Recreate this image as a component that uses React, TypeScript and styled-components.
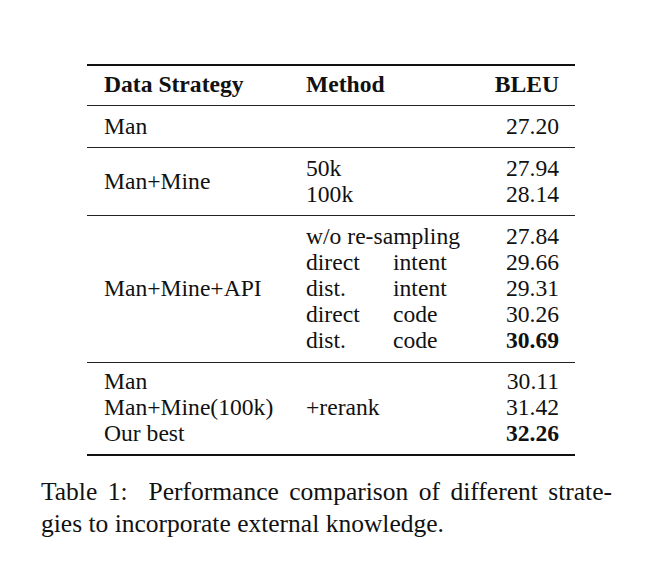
import React from "react";
import styled, { createGlobalStyle } from "styled-components";

const Global = createGlobalStyle`
  html, body { margin: 0; padding: 0; background: #ffffff; }
`;

const Page = styled.div`
  width: 648px;
  height: 562px;
  padding-top: 64px;
  box-sizing: border-box;
  display: flex;
  flex-direction: column;
  align-items: flex-start;
  font-family: "Liberation Serif", "DejaVu Serif", serif;
  color: #111;
`;

const Table = styled.div`
  margin-left: 87px;
  width: 488px;
  border-top: 2px solid #111;
  border-bottom: 2px solid #111;
  font-size: 23.6px;
  line-height: 26px;
`;

const Section = styled.div<{ $pt: number; $pb: number; $head?: boolean }>`
  display: grid;
  grid-template-columns: 202px 87px 1fr auto;
  grid-auto-rows: 26px;
  padding: ${(p) => p.$pt}px 16px ${(p) => p.$pb}px 17px;
  font-weight: ${(p) => (p.$head ? 700 : 400)};
  & + & { border-top: 1px solid #222; }
`;

const Strategy = styled.div<{ $span: number }>`
  grid-column: 1;
  grid-row: 1 / span ${(p) => p.$span};
  align-self: center;
  white-space: nowrap;
`;

const Method = styled.div<{ $wide?: boolean }>`
  grid-column: ${(p) => (p.$wide ? "2 / span 2" : "2")};
  white-space: nowrap;
`;

const Target = styled.div`
  grid-column: 3;
  white-space: nowrap;
`;

const Score = styled.div<{ $best?: boolean }>`
  grid-column: 4;
  text-align: right;
  font-weight: ${(p) => (p.$best ? 700 : "inherit")};
`;

const Caption = styled.div`
  margin: 20px 0 0 41px;
  width: 571px;
  font-size: 25.5px;
  line-height: 32px;
`;

const CaptionLine = styled.div<{ $fill?: boolean }>`
  text-align: ${(p) => (p.$fill ? "justify" : "left")};
  text-align-last: ${(p) => (p.$fill ? "justify" : "auto")};
  white-space: nowrap;
`;

type Row = { m?: string; t?: string; s: string; best?: boolean };

const apiRows: Row[] = [
  { m: "w/o re-sampling", s: "27.84" },
  { m: "direct", t: "intent", s: "29.66" },
  { m: "dist.", t: "intent", s: "29.31" },
  { m: "direct", t: "code", s: "30.26" },
  { m: "dist.", t: "code", s: "30.69", best: true },
];

const MethodCells: React.FC<{ rows: Row[] }> = ({ rows }) => (
  <>
    {rows.map((r, i) => (
      <React.Fragment key={i}>
        {r.t ? (
          <>
            <Method style={{ gridRow: i + 1 }}>{r.m}</Method>
            <Target style={{ gridRow: i + 1 }}>{r.t}</Target>
          </>
        ) : (
          <Method $wide style={{ gridRow: i + 1 }}>{r.m ?? ""}</Method>
        )}
        <Score $best={r.best} style={{ gridRow: i + 1 }}>{r.s}</Score>
      </React.Fragment>
    ))}
  </>
);

export default function App() {
  return (
    <>
      <Global />
      <Page>
        <Table>
          <Section $pt={5} $pb={8} $head>
            <Strategy $span={1}>Data Strategy</Strategy>
            <Method>Method</Method>
            <Score>BLEU</Score>
          </Section>
          <Section $pt={7} $pb={8}>
            <Strategy $span={1}>Man</Strategy>
            <MethodCells rows={[{ s: "27.20" }]} />
          </Section>
          <Section $pt={7} $pb={8}>
            <Strategy $span={2}>Man+Mine</Strategy>
            <MethodCells rows={[{ m: "50k", s: "27.94" }, { m: "100k", s: "28.14" }]} />
          </Section>
          <Section $pt={7} $pb={9}>
            <Strategy $span={5}>Man+Mine+API</Strategy>
            <MethodCells rows={apiRows} />
          </Section>
          <Section $pt={5} $pb={8}>
            <Strategy $span={1} style={{ gridRow: 1 }}>Man</Strategy>
            <Strategy $span={1} style={{ gridRow: 2 }}>Man+Mine(100k)</Strategy>
            <Strategy $span={1} style={{ gridRow: 3 }}>Our best</Strategy>
            <MethodCells
              rows={[
                { s: "30.11" },
                { m: "+rerank", s: "31.42" },
                { s: "32.26", best: true },
              ]}
            />
          </Section>
        </Table>
        <Caption>
          <CaptionLine $fill>Table 1:&nbsp; Performance comparison of different strate-</CaptionLine>
          <CaptionLine>gies to incorporate external knowledge.</CaptionLine>
        </Caption>
      </Page>
    </>
  );
}
